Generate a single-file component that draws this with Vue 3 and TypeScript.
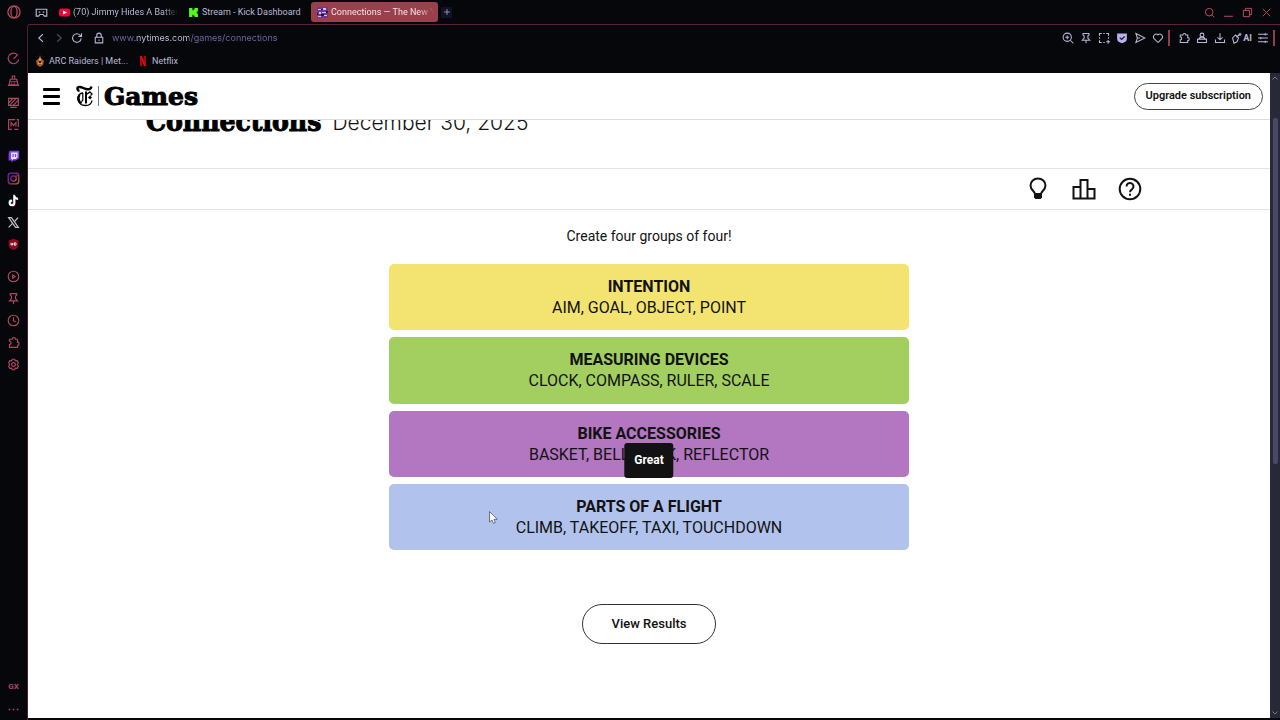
<script setup lang="ts">
import { h, ref, type FunctionalComponent } from 'vue'

interface NavItem {
  label: string
  icon: string
}
interface Group {
  title: string
  words: string
  tone: string
}

const glyphs: Record<string, string[]> = {
  pad: ['M1.500 4h13v8.500h-3L10 10.500H6l-1.500 2h-3z', 'M4.500 7.500h2M9.500 7.500h2'],
  speed: ['M12.500 3.200A6.500 6.500 0 1 0 14.400 9', 'M8 8.500l5.500-5.500M4 13l1.500 1'],
  cleaner: ['M6.500 6V2.500h3V6', 'M4 6.500h8l1.500 7H2.500z', 'M4 9.500h8M5.500 13.500l.5-2M9 13.500v-2M1 14h14'],
  panels: ['M2 3h12v8.500H2z', 'M2.500 8L7.500 3M3 11.500L11.500 3M7.500 11.500L14 5M4 14h8'],
  mods: ['M10 2H2v12h4M12 2h2v9M9 14h5', 'M5 10.500v-5l3 3.500 3-3.500v5'],
  player: ['M8 1.500a6.500 6.500 0 1 0 0 13a6.500 6.500 0 1 0 0-13z', 'M7 6l3 2-3 2z'],
  pin: ['M4 2h8v2l-1.500 1v3L13 11H3l2.500-3V5L4 4z', 'M8 11v4'],
  clock: ['M8 1.500a6.500 6.500 0 1 0 0 13a6.500 6.500 0 1 0 0-13z', 'M8 4v4.500l3 1'],
  puzzle: ['M3 4h3.500a2 2 0 0 1 4 0H13v3.500a2 2 0 0 1 0 4V14H3v-3.500a2 2 0 0 0 0-4z'],
  gear: ['M6.500 1.500h3l.8 2 2.200-.2 1.500 2.600L12.700 8l1.300 2.100-1.500 2.600-2.200-.2-.8 2h-3l-.8-2-2.200.2L2 10.100 3.300 8 2 5.900l1.500-2.600 2.200.2z', 'M8 5.700a2.300 2.300 0 1 0 0 4.600a2.300 2.300 0 1 0 0-4.600z'],
  back: ['M10.500 3L5 8l5.500 5'],
  forward: ['M5.500 3L11 8l-5.500 5'],
  reload: ['M13.500 8.500A5.700 5.700 0 1 1 12 4.200L13.500 5.800', 'M14 1.800v4.200H9.800'],
  lock: ['M3 7h10v7.500H3z', 'M5 7V4.500a3 3 0 0 1 6 0V7', 'M8 10v2'],
  search: ['M7.500 2a5.500 5.500 0 1 0 0 11a5.500 5.500 0 1 0 0-11z', 'M11.500 11.500L15 15'],
  minimise: ['M1.500 13.500h13'],
  restore: ['M5 5V2h9v9h-3', 'M2 5h9v9H2z'],
  close: ['M2.500 2.500l11 11M13.500 2.500l-11 11'],
  zoom: ['M7 1.500a5.500 5.500 0 1 0 0 11a5.500 5.500 0 1 0 0-11z', 'M11 11l4 4M4.500 7h5M7 4.500v5'],
  snap: ['M2 5V2h3M7 2h2M11 2h3v3M14 7v2M2 7v2M2 11v3h3M7 14h2M11 13h5M13.500 10.500v5'],
  send: ['M2.500 2l12 6-12 6 2-6z', 'M4.500 8H8'],
  heart: ['M8 14L2.500 8.500A3.700 3.700 0 0 1 8 3.700a3.700 3.700 0 0 1 5.500 4.800z'],
  inbox: ['M8 1.500a2.500 2.500 0 1 0 0 5a2.500 2.500 0 1 0 0-5z', 'M4.500 9.500a3.500 3 0 0 1 7 0', 'M2 9.500h12V14H2z'],
  download: ['M8 1.500V10M4.500 7L8 10.500 11.500 7M2 10v4h12v-4'],
  wand: ['M2 8l4-4 4 4-2 5-4 2z', 'M7 7l4-3M12 1v4M10 3h4'],
  sliders: ['M1.500 3h13M1.500 8h13M1.500 13h13M11 1.500v3M5 6.500v3M11 11.500v3'],
  plus: ['M8 2v12M2 8h12'],
}

const Glyph: FunctionalComponent<{ name: string }> = (props) =>
  h(
    'svg',
    { viewBox: '0 0 16 16', fill: 'none', stroke: 'currentColor', 'stroke-width': 1.4, 'aria-hidden': 'true' },
    (glyphs[props.name] ?? []).map((d) => h('path', { d })),
  )
Glyph.props = ['name']

const upper: NavItem[] = [
  { label: 'Speed', icon: 'speed' },
  { label: 'Cleaner', icon: 'cleaner' },
  { label: 'Panels', icon: 'panels' },
  { label: 'Mods', icon: 'mods' },
]
const lower: NavItem[] = [
  { label: 'Player', icon: 'player' },
  { label: 'Pinboards', icon: 'pin' },
  { label: 'History', icon: 'clock' },
  { label: 'Extensions', icon: 'puzzle' },
  { label: 'Settings', icon: 'gear' },
]
const controls: NavItem[] = [
  { label: 'Search tabs', icon: 'search' },
  { label: 'Minimise', icon: 'minimise' },
  { label: 'Restore', icon: 'restore' },
  { label: 'Close', icon: 'close' },
]
const extras: NavItem[] = [
  { label: 'Extensions', icon: 'puzzle' },
  { label: 'Profile', icon: 'inbox' },
  { label: 'Downloads', icon: 'download' },
]
const groups: Group[] = [
  { title: 'INTENTION', words: 'AIM, GOAL, OBJECT, POINT', tone: 'yellow' },
  { title: 'MEASURING DEVICES', words: 'CLOCK, COMPASS, RULER, SCALE', tone: 'green' },
  { title: 'BIKE ACCESSORIES', words: 'BASKET, BELL, LOCK, REFLECTOR', tone: 'purple' },
  { title: 'PARTS OF A FLIGHT', words: 'CLIMB, TAKEOFF, TAXI, TOUCHDOWN', tone: 'blue' },
]
const address = ref('www.nytimes.com/games/connections')
</script>

<template>
  <div class="browser">
    <button class="opera" aria-label="Opera menu">
      <svg viewBox="0 0 16 16" fill="none" stroke="currentColor" stroke-width="1.500">
        <circle cx="8" cy="8" r="7" /><ellipse cx="8" cy="8" rx="3.500" ry="6.500" />
      </svg>
    </button>

    <div class="tabs">
      <button class="tab workspace" aria-label="Workspace"><Glyph name="pad" /></button>
      <button class="tab first">
        <svg viewBox="0 0 11 10"><rect y="1" width="11" height="8" rx="2" fill="#f5003d" /><path d="M4 3l4 2-4 2z" fill="#fff" /></svg>
        <span class="faded">(70) Jimmy Hides A Batter</span>
      </button>
      <button class="tab second">
        <svg viewBox="0 0 10 10"><path d="M1 1h3v2h1V2h1V1h3v3H8v2h1v3H6V8H5V7H4v2H1z" fill="#53fc18" /></svg>
        <span>Stream - Kick Dashboard</span>
      </button>
      <button class="tab active">
        <svg viewBox="0 0 11 11">
          <rect width="11" height="11" rx="1" fill="#6a3a8c" />
          <path d="M1 2h3v1H1zM6 1h3v2H6zM2 5h2v2H2zM5 5h4v1H5zM1 9h3v1H1zM7 8h3v1H7z" fill="#d9b8ff" />
          <path d="M4 2h2v1H4zM9 4h2v2H9zM4 7h3v2H4zM0 6h1v2H0z" fill="#251440" />
        </svg>
        <span class="faded">Connections — The New Y</span>
      </button>
      <button class="add" aria-label="New tab"><Glyph name="plus" /></button>
      <div class="controls">
        <button v-for="c in controls" :key="c.icon" :aria-label="c.label"><Glyph :name="c.icon" /></button>
      </div>
    </div>

    <nav class="sidebar" aria-label="Sidebar">
      <div class="cluster">
        <button v-for="n in upper" :key="n.icon" :aria-label="n.label"><Glyph :name="n.icon" /></button>
      </div>
      <div class="cluster">
        <button aria-label="Twitch">
          <svg viewBox="0 0 16 16"><path d="M3 1h12v9l-4 3H8l-2.500 2.500V13H2V4z" fill="#7c3ff2" /><path d="M5 3h8v6l-2 2H8l-2 1.500V11H5z" fill="#e9e0ff" /><path d="M7.500 5v3.500M10.500 5v3.500" stroke="#7c3ff2" stroke-width="1.500" /></svg>
        </button>
        <button aria-label="Instagram">
          <svg viewBox="0 0 16 16" fill="none" stroke="url(#insta)" stroke-width="1.600">
            <defs><linearGradient id="insta" x1="0" y1="0" x2="1" y2="1"><stop offset="0" stop-color="#5a25b5" /><stop offset=".55" stop-color="#a02470" /><stop offset="1" stop-color="#b87030" /></linearGradient></defs>
            <rect x="1.500" y="1.500" width="13" height="13" rx="3" /><circle cx="8" cy="8" r="3.300" /><circle cx="11.800" cy="4.200" r=".4" />
          </svg>
        </button>
        <button aria-label="TikTok">
          <svg viewBox="0 0 16 16" fill="none" stroke-width="2.200"><path d="M8.500 1v9.500a2.800 2.800 0 1 1-2.800-2.800M8.500 2c.5 2.500 2 3.500 4.500 3.500" stroke="#25d5d0" /><path d="M9.500 2v9.500a2.800 2.800 0 1 1-2.800-2.800M9.500 3c.5 2.500 2 3.500 4.500 3.500" stroke="#ec3f63" /><path d="M9 1.500V11a2.800 2.800 0 1 1-2.800-2.800M9 2.500C9.500 5 11 6 13.500 6" stroke="#fff" /></svg>
        </button>
        <button aria-label="X">
          <svg viewBox="0 0 16 16" fill="none" stroke="#c4c4c8"><path d="M2 2h3.500l8.500 12h-3.500z" stroke-width="1.500" /><path d="M13.500 2L9.200 7M6.800 9L2 14" stroke-width="1.500" /></svg>
        </button>
        <button aria-label="Shield">
          <svg viewBox="0 0 16 16"><path d="M8 1l6 2v6c0 3-3 5-6 6-3-1-6-3-6-6V3z" fill="#8c0d1a" /><path d="M5 6v2.500h2V6M9 6v2.800h1.500c1 0 1-2.800 0-2.800z" fill="none" stroke="#fff" stroke-width="1.200" /></svg>
        </button>
      </div>
      <div class="cluster">
        <button v-for="n in lower" :key="n.icon" :aria-label="n.label"><Glyph :name="n.icon" /></button>
      </div>
      <div class="cluster bottom">
        <button class="gx">GX</button>
        <button aria-label="More"><svg viewBox="0 0 16 16" fill="currentColor"><path d="M2 7h2v2H2zM7 7h2v2H7zM12 7h2v2h-2z" /></svg></button>
      </div>
    </nav>

    <div class="window">
      <div class="toolbar">
        <button aria-label="Back"><Glyph name="back" /></button>
        <button class="dim" aria-label="Forward"><Glyph name="forward" /></button>
        <button aria-label="Reload"><Glyph name="reload" /></button>
        <button class="secure" aria-label="Site information"><Glyph name="lock" /></button>
        <input v-model="address" class="address" type="text" aria-label="Address" spellcheck="false" />
        <button aria-label="Zoom"><Glyph name="zoom" /></button>
        <button aria-label="Pin page"><Glyph name="pin" /></button>
        <button aria-label="Snapshot"><Glyph name="snap" /></button>
        <button aria-label="Ad blocker">
          <svg viewBox="0 0 16 16"><path d="M1.500 2h13v7c0 3.500-3 5-6.500 6-3.500-1-6.500-2.500-6.500-6z" fill="#b8b2ec" /><path d="M5 7.500l2.500 2.500L11.500 6" fill="none" stroke="#15142a" stroke-width="1.600" /></svg>
        </button>
        <button aria-label="Send"><Glyph name="send" /></button>
        <button aria-label="Favourite"><Glyph name="heart" /></button>
        <i class="bar"></i>
        <button v-for="e in extras" :key="e.icon" :aria-label="e.label"><Glyph :name="e.icon" /></button>
        <button class="ai"><Glyph name="wand" />AI</button>
        <button aria-label="Easy setup"><Glyph name="sliders" /></button>
        <i class="bar end"></i>
      </div>

      <div class="bookmarks">
        <a href="#arc">
          <svg viewBox="0 0 10 12"><path d="M5 0l1 3 3 3-1 4-3 2-3-2-1-4 3-3z" fill="#a95c25" /><path d="M5 3v3M3 8h4" stroke="#f5b05c" stroke-width="1.500" /><circle cx="5" cy="7" r="1.200" fill="#20120c" /></svg>
          ARC Raiders | Met...
        </a>
        <a href="#netflix">
          <svg viewBox="0 0 10 12"><path d="M3 1v10M7 1v10" stroke="#a80712" stroke-width="2" /><path d="M3 1l4 10" stroke="#e50914" stroke-width="2" /></svg>
          Netflix
        </a>
      </div>

      <div class="viewport">
        <main class="page">
          <header class="masthead">
            <button class="menu" aria-label="Menu"><i></i><i></i><i></i></button>
            <a class="brand" href="#games">
              <svg viewBox="0 0 18 22" fill="none" stroke="#000">
                <path d="M3.500 6C.8 5.500.8 2.500 3 2c2.500-.5 4.500 1.500 7 2 2.500.5 5 .5 5.500-2.500" stroke-width="2.400" />
                <path d="M7 8C3.500 8 1.500 11 1.800 14c.4 4 3.700 6.500 7.700 6.500 3.500 0 6-2 6.500-5" stroke-width="1.300" />
                <path d="M3.500 10c-1.500 3-1 6.500 2 8.500" stroke-width="2.200" />
                <path d="M6.800 8v7.500l-1.500 1" stroke-width="1.200" />
                <path d="M10 6.500v12" stroke-width="2" />
                <path d="M10 9c2 0 2.500-1.500 4-2l2 2-1.500 1.500" stroke-width="1.400" />
                <path d="M14 10.500l2 2-2 2-2-2z" fill="#000" stroke="none" />
              </svg>
              <i class="rule"></i>
              <span>Games</span>
            </a>
            <button class="upgrade">Upgrade subscription</button>
          </header>

          <div class="heading">
            <h1>Connections</h1>
            <p>December 30, 2025</p>
          </div>

          <div class="tools">
            <button aria-label="Hints">
              <svg viewBox="0 0 24 24" fill="none" stroke="#121212" stroke-width="2"><path d="M9 17c0-2.500-4.500-4-4.500-8.500a7.500 7 0 0 1 15 0c0 4.500-4.500 6-4.500 8.500z" /><path d="M8 16h8v4.500l-1.500 1.500h-5L8 20.500z" fill="#121212" stroke="none" /></svg>
            </button>
            <button aria-label="Statistics">
              <svg viewBox="0 0 24 24" fill="none" stroke="#121212" stroke-width="2"><path d="M1.500 10h7v11.500h-7zM8.500 3h7v18.500h-7zM15.500 12h7v9.500h-7z" /></svg>
            </button>
            <button aria-label="Help">
              <svg viewBox="0 0 24 24" fill="none" stroke="#121212" stroke-width="2"><circle cx="12" cy="12" r="10.300" /><path d="M8.500 9.500a3.500 3.500 0 1 1 5.500 2.800c-1.300 1-2 1.500-2 3" /><path d="M11 16.800h2v2h-2z" fill="#121212" stroke="none" /></svg>
            </button>
          </div>

          <p class="prompt">Create four groups of four!</p>

          <section class="board">
            <article v-for="g in groups" :key="g.title" :class="['group', g.tone]">
              <h2>{{ g.title }}</h2>
              <p>{{ g.words }}</p>
            </article>
            <div class="toast" role="status">Great</div>
            <svg class="cursor" viewBox="0 0 9 13" aria-hidden="true"><path d="M.5.500v10.500l2.500-2 1.500 3.300 1.800-.8L4.900 8.300h3.300z" fill="#fff" stroke="#4d5566" stroke-width=".8" /></svg>
          </section>

          <button class="results">View Results</button>
        </main>

        <div class="scroll" aria-hidden="true">
          <svg viewBox="0 0 8 6"><path d="M1.500 4.500L4 2l2.500 2.500" /></svg>
          <i></i>
          <svg viewBox="0 0 8 6"><path d="M1.500 1.500L4 4l2.500-2.500" /></svg>
        </div>
      </div>
    </div>
  </div>
</template>

<style>
body {
  margin: 0;
  background: #06070b;
}
</style>

<style scoped>
.browser,
.browser * {
  box-sizing: border-box;
}
.browser {
  display: grid;
  grid-template-columns: 27px minmax(0, 1fr);
  grid-template-rows: 24px minmax(0, 1fr);
  height: 100vh;
  background: #06070b;
  color: #b9b9d6;
  font: 9px/12px Roboto, "Liberation Sans", sans-serif;
}
button {
  display: flex;
  align-items: center;
  justify-content: center;
  padding: 0;
  border: 0;
  background: none;
  color: inherit;
  font: inherit;
  white-space: nowrap;
}
a {
  color: inherit;
  text-decoration: none;
}
h1,
h2,
p {
  margin: 0;
}
svg {
  display: block;
  flex: none;
}
.opera {
  color: #b8485c;
}
.opera svg {
  width: 14px;
  height: 14px;
}
.tabs {
  display: flex;
  align-items: center;
  min-width: 0;
  padding-left: 8px;
}
.tab {
  height: 20px;
  gap: 3px;
  justify-content: flex-start;
}
.tab svg {
  width: 11px;
  height: 11px;
}
.tab.workspace svg {
  width: 13px;
  height: 13px;
}
.first {
  width: 130px;
  padding-left: 11px;
}
.second {
  width: 133px;
  padding-left: 10px;
}
.active {
  width: 127px;
  padding: 0 4px 0 6px;
  border-radius: 3px;
  background: #98404b;
  color: #f6e3e8;
}
.faded {
  flex: 1;
  overflow: hidden;
  text-align: left;
  mask-image: linear-gradient(90deg, #000 85%, transparent);
}
.add {
  width: 11px;
  height: 11px;
  margin-left: 3px;
  background: #101228;
}
.add svg {
  width: 8px;
  height: 8px;
}
.controls {
  display: flex;
  margin-left: auto;
  padding-right: 4px;
  color: #c04a62;
}
.controls button {
  width: 19px;
  height: 20px;
}
.controls svg {
  width: 11px;
  height: 11px;
}
.sidebar {
  display: flex;
  flex-direction: column;
  gap: 10px;
  padding-top: 23px;
  color: #ae4860;
}
.cluster button {
  width: 27px;
  height: 22px;
}
.cluster svg {
  width: 13px;
  height: 13px;
}
.bottom {
  margin-top: auto;
}
.cluster .gx {
  font-size: 8px;
  font-weight: 700;
}
.window {
  display: flex;
  flex-direction: column;
  min-width: 0;
  border-top: 1px solid #5b2634;
  border-left: 1px solid #4a202c;
  border-top-left-radius: 3px;
  padding-bottom: 2px;
}
.toolbar {
  display: flex;
  align-items: center;
  height: 26px;
  padding: 0 5px 0 4px;
}
.toolbar button {
  width: 18px;
  height: 20px;
}
.toolbar svg {
  width: 12px;
  height: 12px;
}
.toolbar .dim {
  color: #50516a;
}
.toolbar .secure {
  margin: 0 4px;
}
.address {
  flex: 1;
  min-width: 0;
  padding: 0;
  border: 0;
  outline: 0;
  background: linear-gradient(90deg, #6c6da6 23px, #c6c6e2 23px, #c6c6e2 77px, #6c6da6 77px);
  background-clip: text;
  color: transparent;
  font: 9px/12px Inter, "Liberation Sans", sans-serif;
}
.bar {
  width: 2px;
  height: 16px;
  margin: 0 5px 0 1px;
  background: #8f3f4a;
}
.bar.end {
  margin-right: 0;
}
.toolbar .ai {
  width: 25px;
  font-weight: 700;
}
.bookmarks {
  display: flex;
  align-items: center;
  gap: 10px;
  height: 22px;
  padding: 0 7px 2px;
}
.bookmarks a {
  display: flex;
  align-items: center;
  gap: 4px;
}
.bookmarks svg {
  width: 10px;
  height: 12px;
}
.viewport {
  display: flex;
  flex: 1;
  min-height: 0;
}
.page {
  display: flex;
  flex: 1;
  flex-direction: column;
  align-items: center;
  min-width: 0;
  overflow: hidden;
  background: #fff;
  color: #121212;
  font: 14px/20px Roboto, "Liberation Sans", sans-serif;
}
.masthead {
  display: flex;
  flex: none;
  align-items: center;
  width: 100%;
  height: 47px;
  padding: 0 7px 0 15px;
  border-bottom: 1px solid #dcdcdc;
}
.menu {
  flex-direction: column;
  gap: 4px;
  width: 17px;
}
.menu i {
  width: 17px;
  height: 3px;
  border-radius: 1px;
  background: #000;
}
.brand {
  display: flex;
  align-items: center;
  margin-left: 16px;
  color: #000;
}
.brand svg {
  width: 18px;
  height: 22px;
}
.rule {
  width: 1px;
  height: 20px;
  margin: 0 5px 0 4px;
  background: #777;
}
.brand span {
  padding-top: 1px;
  font: 700 25px/30px "DejaVu Serif", serif;
  -webkit-text-stroke: 1px #000;
}
.upgrade {
  height: 27px;
  margin-left: auto;
  padding: 0 11px;
  border: 1px solid #444;
  border-radius: 14px;
  font-size: 11px;
  font-weight: 600;
}
.heading {
  display: flex;
  flex: none;
  align-items: flex-end;
  gap: 11px;
  width: 100%;
  height: 49px;
  padding: 0 118px 28px;
  overflow: hidden;
  border-bottom: 1px solid #e4e4e8;
}
.heading h1 {
  color: #000;
  font: 700 28px/36px "DejaVu Serif Condensed", "DejaVu Serif", serif;
  -webkit-text-stroke: 1px #000;
}
.heading p {
  font: 300 21px/34px Inter, sans-serif;
}
.tools {
  display: flex;
  flex: none;
  justify-content: flex-end;
  width: 100%;
  height: 41px;
  padding: 0 117px;
  border-bottom: 1px solid #e4e4e8;
}
.tools button {
  width: 46px;
}
.tools svg {
  width: 24px;
  height: 24px;
}
.prompt {
  padding: 16px 0 18px;
}
.board {
  position: relative;
  display: grid;
  flex: none;
  grid-auto-rows: 1fr;
  gap: 7px;
  width: 520px;
  max-width: 100%;
  min-height: 286px;
}
.group {
  padding: 12px 8px;
  border-radius: 5px;
  text-align: center;
  font-size: 16px;
  line-height: 21px;
}
.group h2 {
  font-size: 16px;
  font-weight: 700;
}
.yellow {
  background: #f3e471;
}
.green {
  background: #a3cf60;
}
.purple {
  background: #b376c1;
}
.blue {
  background: #b1c3ec;
}
.toast {
  position: absolute;
  top: 179px;
  left: 50%;
  padding: 7px 10px 8px;
  transform: translateX(-50%);
  border-radius: 3px;
  background: #121212;
  color: #fff;
  font-size: 12px;
  font-weight: 700;
}
.cursor {
  position: absolute;
  top: 247px;
  left: 100px;
  width: 9px;
  height: 13px;
}
.results {
  flex: none;
  height: 40px;
  margin-top: 54px;
  padding: 0 29px;
  border: 1px solid #333;
  border-radius: 20px;
  font-size: 13px;
  font-weight: 500;
}
.scroll {
  display: flex;
  flex-direction: column;
  align-items: center;
  width: 10px;
  padding: 2px 0;
  background: #272838;
}
.scroll i {
  width: 5px;
  height: 54%;
  margin: 37px 0 auto;
  border-radius: 2px;
  background: #4b4867;
}
.scroll svg {
  width: 8px;
  height: 6px;
  fill: none;
  stroke: #77778f;
}
</style>
